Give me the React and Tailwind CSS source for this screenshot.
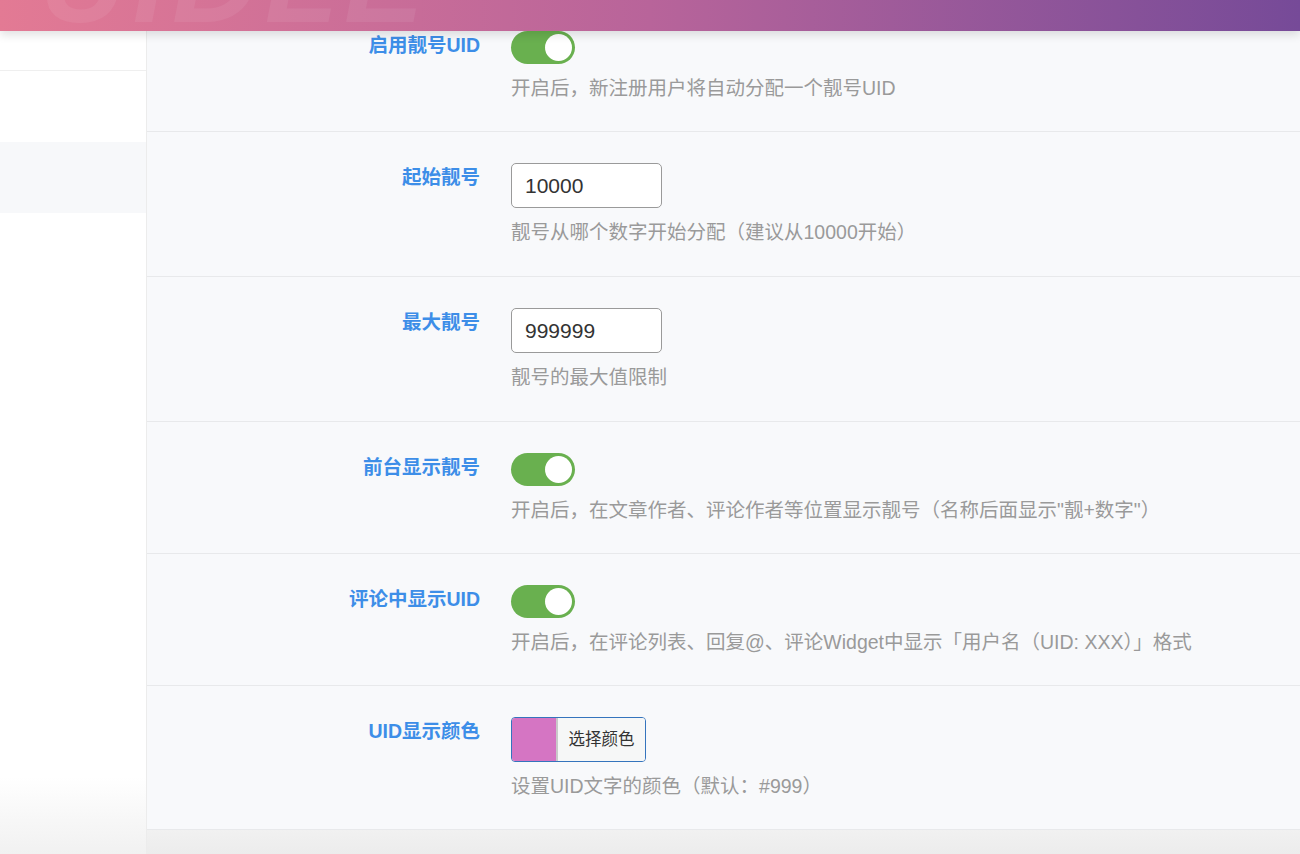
import React from "react";

const font = { fontFamily: '"Liberation Sans", "Noto Sans CJK SC", sans-serif' };

function Toggle() {
  return (
    <div className="flex h-[33px] w-[64px] items-center justify-end rounded-full bg-[#69b04f] pr-[3px]">
      <div className="h-[27px] w-[27px] rounded-full bg-white" />
    </div>
  );
}

function NumberInput({ value }) {
  return (
    <input
      readOnly
      value={value}
      className="h-[45px] w-[151px] rounded-[5px] border border-[#9a9a9a] bg-white pl-[13px] text-[21px] text-[#333] outline-none"
    />
  );
}

function ColorPicker() {
  return (
    <div className="flex h-[45px] w-[135px] overflow-hidden rounded-[4px] border border-[#3574bd]">
      <div className="w-[46px] border-r-2 border-[#c9c9c9] bg-[#d575c3]" />
      <div className="flex flex-1 items-center justify-center bg-[#f6f7f7] text-[16.5px] text-[#333]">
        选择颜色
      </div>
    </div>
  );
}

function Row({ label, children, desc, first, tall }) {
  return (
    <div
      className={
        "flex border-b border-[#e8e9eb] " +
        (first ? "pt-0 " : "pt-[31px] ") +
        (tall ? "pb-[30px]" : "pb-[29px]")
      }
    >
      <div className="w-[333px] shrink-0 text-right text-[19.5px] font-bold leading-[28px] text-[#3d8ee8]">
        {label}
      </div>
      <div className="ml-[31px] flex flex-col items-start">
        {children}
        <p className="mt-[10px] text-[19.5px] leading-[28px] text-[#9a9a9a]">{desc}</p>
      </div>
    </div>
  );
}

export default function App() {
  return (
    <div className="flex h-[854px] w-[1300px] flex-col overflow-hidden bg-[#f8f9fb]" style={font}>
      <div className="relative z-10 h-[31px] shrink-0 overflow-hidden bg-gradient-to-r from-[#e37a94] via-[#b8649a] to-[#764a98] shadow-[0_4px_10px_rgba(0,0,0,0.12)]">
        <svg className="absolute left-0 top-0" width="700" height="31" aria-hidden="true">
          <text x="40" y="22" fontSize="120" fontWeight="900" fontStyle="italic" fill="white" fillOpacity="0.07" letterSpacing="6">
            UIDLE
          </text>
        </svg>
      </div>

      <div className="flex flex-1">
        <aside className="flex w-[147px] shrink-0 flex-col border-r border-[#ececec] bg-white">
          <div className="h-[40px] border-b border-[#efefef]" />
          <div className="h-[71px]" />
          <div className="h-[71px] bg-[#f7f8fa]" />
          <div className="flex-1 bg-gradient-to-b from-white from-[88%] to-[#f1f1f1]" />
        </aside>

        <main className="flex flex-1 flex-col">
          <Row first label="启用靓号UID" desc="开启后，新注册用户将自动分配一个靓号UID">
            <Toggle />
          </Row>
          <Row tall label="起始靓号" desc="靓号从哪个数字开始分配（建议从10000开始）">
            <NumberInput value="10000" />
          </Row>
          <Row tall label="最大靓号" desc="靓号的最大值限制">
            <NumberInput value="999999" />
          </Row>
          <Row label="前台显示靓号" desc={'开启后，在文章作者、评论作者等位置显示靓号（名称后面显示"靓+数字"）'}>
            <Toggle />
          </Row>
          <Row label="评论中显示UID" desc="开启后，在评论列表、回复@、评论Widget中显示「用户名（UID: XXX）」格式">
            <Toggle />
          </Row>
          <Row label="UID显示颜色" desc="设置UID文字的颜色（默认：#999）">
            <ColorPicker />
          </Row>
          <div className="flex-1 bg-gradient-to-b from-[#f1f1f1] to-[#ececec]" />
        </main>
      </div>
    </div>
  );
}
